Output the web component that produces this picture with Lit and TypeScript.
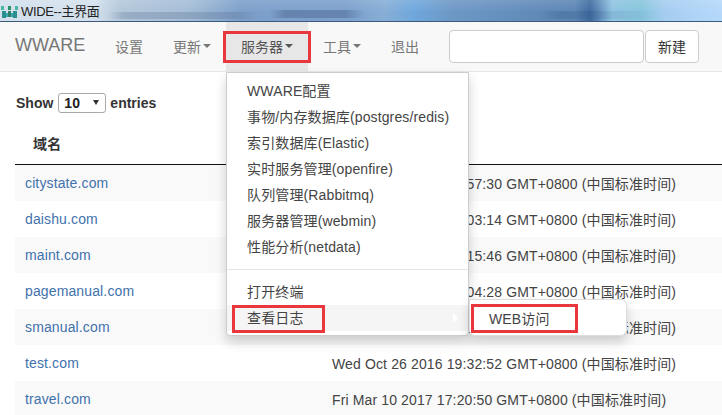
import { LitElement, html, css, svg } from "lit";
import { customElement } from "lit/decorators.js";

const rows: [string, string][] = [
  ["citystate.com", "Wed Oct 26 2016 19:57:30 GMT+0800 (中国标准时间)"],
  ["daishu.com", "Wed Oct 26 2016 20:03:14 GMT+0800 (中国标准时间)"],
  ["maint.com", "Wed Oct 26 2016 20:15:46 GMT+0800 (中国标准时间)"],
  ["pagemanual.com", "Wed Oct 26 2016 20:04:28 GMT+0800 (中国标准时间)"],
  ["smanual.com", "Wed Oct 26 2016 19:32:40 GMT+0800 (中国标准时间)"],
  ["test.com", "Wed Oct 26 2016 19:32:52 GMT+0800 (中国标准时间)"],
  ["travel.com", "Fri Mar 10 2017 17:20:50 GMT+0800 (中国标准时间)"],
];
const menu = [
  "WWARE配置",
  "事物/内存数据库(postgres/redis)",
  "索引数据库(Elastic)",
  "实时服务管理(openfire)",
  "队列管理(Rabbitmq)",
  "服务器管理(webmin)",
  "性能分析(netdata)",
];

@customElement("app-root")
export class AppRoot extends LitElement {
  static styles = css`
    :host {
      display: block;
      width: 722px;
      height: 415px;
      overflow: hidden;
      position: relative;
      background: #fff;
      font-family: "Liberation Sans", "Noto Sans CJK SC", sans-serif;
      font-size: 14px;
      letter-spacing: .13px;
      color: #444;
    }
    .title {
      height: 21px;
      display: flex;
      align-items: center;
      gap: 3px;
      background:
        linear-gradient(90deg, transparent 108px, rgba(90,110,140,.28) 125px, rgba(90,110,140,.3) 235px, transparent 260px) 0 12px / 100% 7px no-repeat,
        linear-gradient(90deg, transparent 270px, rgba(60,80,120,.35) 285px, rgba(60,80,120,.35) 345px, transparent 365px) 0 10px / 100% 8px no-repeat,
        linear-gradient(90deg, transparent 540px, rgba(40,70,110,.2) 560px, transparent 660px) 0 11px / 100% 8px no-repeat,
        linear-gradient(180deg, rgba(255,255,255,.12), rgba(255,255,255,0) 60%),
        linear-gradient(90deg, #d3e0ec 0, #d3e0ec 95px, #b3c7db 120px, #a3bcd6 190px, #7c9fca 240px, #7ba0cc 345px, #86aed6 385px, #6ea7dc 415px, #6d98c6 450px, #6089b8 540px, #5b85b5 575px, #3f6a9f 590px, #5b86b6 598px, #8fc4e2 612px, #86c5dc 640px, #a5cdf0 665px, #b5d9fb 722px);
      border-bottom: 1px solid #3d5a7a;
      font-size: 13px;
      letter-spacing: -.35px;
      color: #222;
    }
    .title svg { display: block; margin-left: 1px; }
    .nav {
      height: 50px;
      box-sizing: border-box;
      display: flex;
      align-items: stretch;
      background: #f8f8f8;
      border-bottom: 1px solid #e7e7e7;
      color: #777;
      letter-spacing: 0;
    }
    .brand { font-size: 18px; padding: 0 15px 2px; display: flex; align-items: center; width: 70px; box-sizing: content-box; }
    .item { display: flex; align-items: center; padding: 0 15px 2px; white-space: nowrap; }
    .item.open { background: #e7e7e7; color: #555; }
    .caret { display: inline-block; width: 0; height: 0; margin-left: 2px; border-top: 4px solid currentColor; border-left: 4px solid transparent; border-right: 4px solid transparent; }
    .search { display: flex; align-items: center; margin-left: 15px; gap: 1px; }
    .input { width: 195px; height: 33px; box-sizing: border-box; border: 1px solid #ccc; border-radius: 4px; background: #fff; }
    .btn { width: 54px; height: 33px; box-sizing: border-box; border: 1px solid #ccc; border-radius: 4px; background: #fff; color: #333; display: flex; align-items: center; justify-content: center; padding-bottom: 1px; }
    .content { padding: 0 0 0 15px; }
    .len { height: 61px; display: flex; align-items: center; gap: 4px; font-weight: 700; padding-left: 1px; box-sizing: border-box; color: #333; letter-spacing: 0; }
    .sel { width: 48px; height: 20px; margin-left: 1px; box-sizing: border-box; border: 1px solid #a9a9a9; border-radius: 3px; display: flex; align-items: center; justify-content: space-between; padding-left: 5px; background: #fff; color: #222; }
    .sel i { display: block; width: 0; height: 0; margin-right: 6px; border-top: 5px solid #333; border-left: 3px solid transparent; border-right: 3px solid transparent; }
    .thead { height: 32px; box-sizing: border-box; border-bottom: 1px solid #111; display: flex; align-items: center; padding: 0 0 11px 18px; font-weight: 700; color: #333; }
    .row { height: 36px; padding: 0 0 0 10px; box-sizing: border-box; display: grid; grid-template-columns: 307px 1fr; align-items: center; white-space: nowrap; }
    .row:nth-child(odd) { background: #f9f9f9; }
    .row a { color: #4272ac; }
    .drop {
      position: absolute; left: 226px; top: 72px; width: 243px; height: 264px; box-sizing: border-box;
      background: #fff; border: 1px solid #ccc; border-radius: 0 0 4px 4px;
      box-shadow: 0 6px 12px rgba(0,0,0,.18);
      padding-top: 5px;
    }
    .mi { height: 26px; display: flex; align-items: center; padding: 0 0 2px 20px; box-sizing: border-box; white-space: nowrap; }
    .sep { height: 1px; background: #e5e5e5; margin: 9px 0 9px; }
    .mi.hover { background: #f5f5f5; position: relative; }
    .arrow { position: absolute; right: 10px; top: 8px; width: 0; height: 0; border-left: 5px solid #fff; border-top: 5px solid transparent; border-bottom: 5px solid transparent; }
    .sub {
      position: absolute; left: 469px; top: 299px; width: 158px; height: 37px; box-sizing: border-box;
      background: #fff; border: 1px solid #ddd; border-radius: 0 6px 6px 6px;
      box-shadow: 0 6px 12px rgba(0,0,0,.18);
      display: flex; align-items: center; padding-left: 19px;
    }
    .mark { position: absolute; border: 3px solid #e8383d; box-sizing: border-box; pointer-events: none; }
    .m1 { left: 223px; top: 31px; width: 88px; height: 32px; }
    .m2 { left: 232px; top: 305px; width: 93px; height: 28px; }
    .m3 { left: 471px; top: 304px; width: 107px; height: 29px; }
  `;

  render() {
    return html`
      <div class="title">
        <svg width="17" height="18" viewBox="0 0 17 18">
          ${[[0,4,"#48b8a0",3,4],[7,4,"#2f8f6a",3,4],[14,4,"#48b8a0",3,4],[1,9,"#2a8f8f",4,7],[5,11,"#38a8b0",2,4],[10,11,"#38a8b0",2,4],[12,9,"#2a8f8f",4,7],[7,9,"#2f7f6a",3,6]].map(
            ([x, y, c, w, h]) => svg`<rect x=${x} y=${y} width=${w} height=${h} fill=${c}></rect>`)}
        </svg>
        <span>WIDE--主界面</span>
      </div>
      <div class="nav">
        <div class="brand">WWARE</div>
        <div class="item">设置</div>
        <div class="item">更新<span class="caret"></span></div>
        <div class="item open">服务器<span class="caret"></span></div>
        <div class="item">工具<span class="caret"></span></div>
        <div class="item">退出</div>
        <div class="search"><div class="input"></div><div class="btn">新建</div></div>
      </div>
      <div class="content">
        <div class="len">Show <div class="sel">10<i></i></div> entries</div>
        <div class="thead">域名</div>
        <div>
          ${rows.map(([d, t]) => html`<div class="row"><a>${d}</a><span>${t}</span></div>`)}
        </div>
      </div>
      <div class="drop">
        ${menu.map((m) => html`<div class="mi">${m}</div>`)}
        <div class="sep"></div>
        <div class="mi">打开终端</div>
        <div class="mi hover">查看日志<span class="arrow"></span></div>
      </div>
      <div class="sub">WEB访问</div>
      <div class="mark m1"></div>
      <div class="mark m2"></div>
      <div class="mark m3"></div>
    `;
  }
}
